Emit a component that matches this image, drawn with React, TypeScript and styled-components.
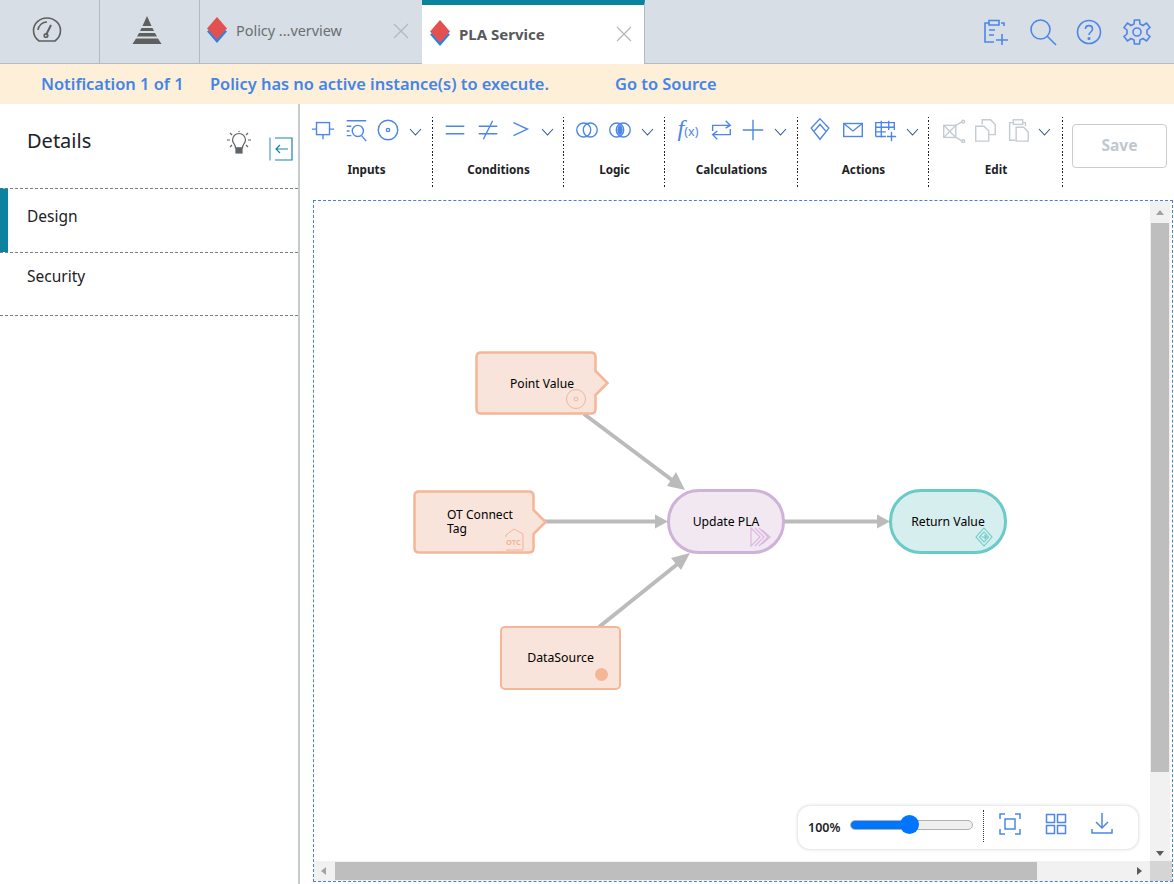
import { ReactNode } from 'react';
import styled, { createGlobalStyle } from 'styled-components';

const blue = '#4c86e8';
const grey = '#c3ccd3';
const teal = '#0b829e';
const orange = '#f5b597';

const GlobalStyle = createGlobalStyle`
  html, body { margin: 0; padding: 0; background: #fff; }
  body { font-family: "Noto Sans", "Liberation Sans", sans-serif; overflow: hidden; }
  * { box-sizing: border-box; }
`;

const Ico = ({ size = 28, color = blue, vb = 28, sw = 1.6, children }: { size?: number; color?: string; vb?: number; sw?: number; children: ReactNode }) => (
  <svg width={size} height={size} viewBox={`0 0 ${vb} ${vb}`} fill="none" stroke={color} strokeWidth={sw}>
    {children}
  </svg>
);

const Logo = () => (
  <svg width="22" height="28" viewBox="0 0 22 28">
    <path d="M1 15.5 L11 27 L21 15.5 L17.5 13 L4.5 13 Z" fill="#1f86f0" />
    <path d="M11 1 L21 12.5 L11 24 L1 12.5 Z" fill="#e2504f" />
  </svg>
);

const Close = () => (
  <svg width="16" height="16" viewBox="0 0 16 16" stroke="#b4b8bc" strokeWidth="1.3">
    <path d="M1 1 L15 15 M15 1 L1 15" />
  </svg>
);

const Chevron = () => (
  <svg width="13" height="8" viewBox="0 0 13 8" fill="none" stroke="#2a5a8c" strokeWidth="1.1">
    <path d="M1 1 L6.500 7 L12 1" />
  </svg>
);

const icons: Record<string, ReactNode> = {
  input: (
    <>
      <rect x="7" y="6" width="14" height="13" />
      <path d="M2 13 H7 M21 13 H26 M14 19 V24" />
    </>
  ),
  query: (
    <>
      <path d="M4 4 H25 M4 10 H9 M4 15 H7 M4 20 H9" />
      <circle cx="16" cy="15" r="6" />
      <path d="M20 20 L25 26" />
    </>
  ),
  point: (
    <>
      <circle cx="14" cy="14" r="10.5" />
      <circle cx="14" cy="14" r="1.8" />
    </>
  ),
  equal: <path d="M4 10 H24 M4 18 H24" />,
  notEqual: <path d="M4 10 H24 M4 18 H24 M19 4 L9 24" />,
  greater: <path d="M7 6 L22 13 L7 20" />,
  union: (
    <>
      <circle cx="10.5" cy="14" r="7.5" />
      <circle cx="17.5" cy="14" r="7.5" />
    </>
  ),
  intersect: (
    <>
      <circle cx="10.5" cy="14" r="7.5" />
      <circle cx="17.5" cy="14" r="7.5" />
      <path d="M14 8 A7.5 7.5 0 0 1 14 20 A7.5 7.5 0 0 1 14 8 Z" fill={blue} stroke="none" />
    </>
  ),
  loop: (
    <>
      <path d="M5 15 V9 H24 M19 4 L24 9 L19 12" />
      <path d="M24 13 V19 H5 M10 15 L5 19 L10 24" />
    </>
  ),
  plus: <path d="M3 14 H25 M14 3 V25" />,
  action: (
    <>
      <path d="M14 2 L23.500 12 L14 24 L4.500 12 Z" />
      <path d="M7.500 15.500 L14 8 L20.500 15.500" />
    </>
  ),
  mail: (
    <>
      <rect x="4" y="7" width="20" height="14" />
      <path d="M4 7 L14 15 L24 7" />
    </>
  ),
  table: (
    <>
      <path d="M4 21 V6 H24 V14 M4 11 H24 M4 16 H15 M4 21 H15 M10 4 V22 M18 4 V14" />
      <path d="M16 21 H26 M21 16 V26" />
    </>
  ),
  cut: (
    <>
      <rect x="4" y="9" width="13" height="13" />
      <path d="M4 9 L17 22 M17 9 L4 22 M17 9 L24 5 M17 22 L24 26" />
      <circle cx="25" cy="5" r="1.5" />
      <circle cx="25" cy="26" r="1.5" />
    </>
  ),
  copy: (
    <>
      <path d="M11 8 V3 H20 L25 8 V19 H18" />
      <path d="M4 10 H13 L18 15 V26 H4 Z" />
    </>
  ),
  paste: (
    <>
      <path d="M9 6 H5 V25 H11 M19 6 H22 V10" />
      <rect x="9" y="3" width="10" height="5" />
      <path d="M12 11 H20 L25 16 V26 H12 Z" />
    </>
  ),
};

const FxLabel = styled.span`
  font-family: "Liberation Serif", serif;
  font-style: italic;
  font-size: 24px;
  line-height: 26px;
  color: ${blue};
  white-space: nowrap;
  small {
    font-family: "Noto Sans", sans-serif;
    font-style: normal;
    font-size: 12.500px;
  }
`;

const toolbarGroups = [
  { label: 'Inputs', width: 133, icons: ['input', 'query', 'point'] },
  { label: 'Conditions', width: 131, icons: ['equal', 'notEqual', 'greater'] },
  { label: 'Logic', width: 101, icons: ['union', 'intersect'] },
  { label: 'Calculations', width: 133, icons: ['fx', 'loop', 'plus'] },
  { label: 'Actions', width: 131, icons: ['action', 'mail', 'table'] },
  { label: 'Edit', width: 134, icons: ['cut', 'copy', 'paste'], muted: true },
];

const flagPath = 'M6 1.500 H116 Q120.500 1.500 120.500 6 V20 L132.500 32 L120.500 44 V58 Q120.500 62.500 116 62.500 H6 Q1.500 62.500 1.500 58 V6 Q1.500 1.500 6 1.500 Z';

export default function App() {
  return (
    <Page>
      <GlobalStyle />
      <TabBar>
        <IconTab>
          <svg width="30" height="26" viewBox="0 0 30 26" fill="none" stroke="#5f5f5f" strokeWidth="1.6">
            <path d="M7 24 C3 21 1.5 17 1.5 13.5 A13.5 12.5 0 0 1 28.500 13.500 C28.500 17 27 21 23 24 Z" />
            <path d="M6 13 A9 9 0 0 1 15 5" />
            <path d="M14 18 L19 8" strokeWidth="2" />
            <circle cx="14" cy="18.500" r="1.800" />
          </svg>
        </IconTab>
        <IconTab>
          <svg width="30" height="28" viewBox="0 0 30 28" fill="#5f5f5f">
            <path d="M15 0 L19.500 10 H10.500 Z" />
            <path d="M9.500 12 H20.500 L22 15 H8 Z" />
            <path d="M7 17 H23 L25 20.500 H5 Z" />
            <path d="M4 22.500 H26 L29.500 28 H0.500 Z" />
          </svg>
        </IconTab>
        <DocTab>
          <Logo />
          <TabTitle>Policy ...verview</TabTitle>
          <Close />
        </DocTab>
        <DocTab $active>
          <Logo />
          <TabTitle $active>PLA Service</TabTitle>
          <Close />
        </DocTab>
        <TabTools>
          <Ico size={28}>
            <path d="M8 5 H4 V24 H13 M20 5 H23 V8 M8 2.500 H18 V7 H8 Z M8 12 H14 M8 17 H13" />
            <path d="M15 22 H27 M21 16 V27" />
          </Ico>
          <Ico size={28}>
            <circle cx="11.500" cy="11.500" r="9.500" />
            <path d="M18.500 18.500 L27 27" />
          </Ico>
          <Ico size={26} vb={26}>
            <circle cx="13" cy="13" r="11.500" />
            <path d="M9.500 10 C9.500 5.500 16.500 5.500 16.500 10 C16.500 13 13 13 13 16" />
            <circle cx="13" cy="19.500" r="0.800" />
          </Ico>
          <Ico size={28}>
            <circle cx="14" cy="14" r="4" />
            <path d="M11.500 2 H16.500 L17 6 L20 7.500 L23.500 5 L27 9.500 L24 12 V16 L27 18.500 L23.500 23 L20 20.500 L17 22 L16.500 26 H11.500 L11 22 L8 20.500 L4.500 23 L1 18.500 L4 16 V12 L1 9.500 L4.500 5 L8 7.500 L11 6 Z" />
          </Ico>
        </TabTools>
      </TabBar>
      <Notice>
        <NoticeText $width={169}>Notification 1 of 1</NoticeText>
        <NoticeText $width={405}>Policy has no active instance(s) to execute.</NoticeText>
        <NoticeText $width={120}>Go to Source</NoticeText>
      </Notice>
      <Body>
        <Sidebar>
          <SideHead>
            <SideTitle>Details</SideTitle>
            <svg width="26" height="24" viewBox="0 0 26 24" fill="none" stroke="#5f6468" strokeWidth="1.200">
              <path d="M9.500 17 C9.500 13 6.500 12.500 6.500 9 A6.500 6.500 0 0 1 19.500 9 C19.500 12.500 16.500 13 16.500 17 Z" />
              <rect x="10" y="17" width="6" height="5" fill="#5f6468" />
              <path d="M1 9 H4 M22 9 H25 M4 2 L6 4 M22 2 L20 4 M4 16 L6 14 M22 16 L20 14 M13 0 V1" />
            </svg>
            <svg width="24" height="24" viewBox="0 0 24 24" fill="none" stroke="#1486b0" strokeWidth="1.200">
              <path d="M1 0.500 V23.500" strokeWidth="1.600" stroke="#7fb6cc" />
              <path d="M6 1 H23 V23 H6" />
              <path d="M19 12 H7 M11 8 L7 12 L11 16" />
            </svg>
          </SideHead>
          <SideItem $active>Design</SideItem>
          <SideItem>Security</SideItem>
        </Sidebar>
        <Main>
          <Toolbar>
            {toolbarGroups.map((group) => (
              <ToolGroup key={group.label} $width={group.width}>
                <ToolIcons>
                  {group.icons.map((name) => (
                    <ToolIcon key={name}>
                      {name === 'fx' ? (
                        <FxLabel>
                          f<small>(x)</small>
                        </FxLabel>
                      ) : (
                        <Ico size={26} color={group.muted ? grey : blue} sw={1.500}>
                          {icons[name]}
                        </Ico>
                      )}
                    </ToolIcon>
                  ))}
                  <ChevronSlot>
                    <Chevron />
                  </ChevronSlot>
                </ToolIcons>
                <ToolLabel>{group.label}</ToolLabel>
              </ToolGroup>
            ))}
            <SaveButton>Save</SaveButton>
          </Toolbar>
          <Canvas>
            <Diagram>
              <svg width="860" height="680" viewBox="0 0 860 680" fill="#bbbbbb" stroke="none">
                <g stroke="#bbbbbb" strokeWidth="4">
                  <path d="M270 213 L362 282" />
                  <path d="M228 320.500 H344" />
                  <path d="M285 426 L366 361" />
                  <path d="M470 320.500 H566" />
                </g>
                <path d="M371 289 L353 285 L362 271 Z" />
                <path d="M354 320.500 L341 313.500 V327.500 Z" />
                <path d="M376 352 L367 369 L357 357 Z" />
                <path d="M576 320.500 L563 313.500 V327.500 Z" />
              </svg>
              <Node $x={161} $y={150} $w={135}>
                <svg width="135" height="64" viewBox="0 0 135 64">
                  <path d={flagPath} fill="#f8e4da" stroke={orange} strokeWidth="2.500" />
                  <circle cx="101" cy="48" r="9.500" fill="none" stroke={orange} strokeWidth="1" />
                  <circle cx="101" cy="48" r="2" fill="none" stroke={orange} strokeWidth="1" />
                </svg>
                <NodeLabel $left={35} $width={80} $top={2}>Point Value</NodeLabel>
              </Node>
              <Node $x={99} $y={289} $w={135}>
                <svg width="135" height="64" viewBox="0 0 135 64">
                  <path d={flagPath} fill="#f8e4da" stroke={orange} strokeWidth="2.500" />
                  <path d="M93 47 V45 L101 39 L110 44 V60 H93" fill="none" stroke={orange} strokeWidth="1" />
                </svg>
                <NodeLabel $left={34} $width={80}>OT Connect Tag</NodeLabel>
                <OtcMark>OTC</OtcMark>
              </Node>
              <Box $x={186} $y={425}>
                DataSource
                <SourceDot />
              </Box>
              <Pill $x={353} $y={288} $fill="#f2e8f2" $line="#cfb2d8">
                Update PLA
                <PillIcon>
                  <svg width="22" height="20" viewBox="0 0 22 20" fill="none" stroke="#dcb7e0" strokeWidth="1.200">
                    <path d="M2 1 V19 L11 10 Z" />
                    <path d="M6 1 L15 10 L6 19 M10 1 L19 10 L10 19 M13 3 L21 10 L13 17" />
                  </svg>
                </PillIcon>
              </Pill>
              <Pill $x={575} $y={288} $fill="#d6eeed" $line="#69cbc8">
                Return Value
                <PillIcon>
                  <svg width="18" height="20" viewBox="0 0 18 20" fill="none" stroke="#69cbc8" strokeWidth="1.100">
                    <path d="M9 1 L17 10 L9 19 L1 10 Z" />
                    <path d="M9 5 L13.500 10 L9 15 L4.500 10 Z" />
                    <path d="M6.500 10 H11.500 M9.500 8 L11.500 10 L9.500 12" />
                  </svg>
                </PillIcon>
              </Pill>
            </Diagram>
            <ZoomPanel>
              <ZoomValue>100%</ZoomValue>
              <ZoomSlider type="range" min={0} max={100} defaultValue={48} />
              <ZoomDivider />
              <ZoomTool>
                <Ico size={24} vb={24} sw={1.500}>
                  <rect x="7" y="7" width="10" height="10" />
                  <path d="M2 7 V2 H7 M17 2 H22 V7 M22 17 V22 H17 M7 22 H2 V17" />
                </Ico>
              </ZoomTool>
              <ZoomTool>
                <Ico size={24} vb={24} sw={1.500}>
                  <rect x="2.500" y="2.500" width="8" height="8" />
                  <rect x="13.500" y="2.500" width="8" height="8" />
                  <rect x="2.500" y="13.500" width="8" height="8" />
                  <rect x="13.500" y="13.500" width="8" height="8" />
                </Ico>
              </ZoomTool>
              <ZoomTool>
                <Ico size={24} vb={24} sw={1.500}>
                  <path d="M12 1 V16 M6 10 L12 16 L18 10 M2 17 V21 H22 V17" />
                </Ico>
              </ZoomTool>
            </ZoomPanel>
            <VScroll>
              <Arrow $dir="up" />
              <VThumb />
              <Arrow $dir="down" />
            </VScroll>
            <HScroll>
              <Arrow $dir="left" />
              <HThumb />
              <Arrow $dir="right" />
            </HScroll>
            <ScrollCorner />
          </Canvas>
        </Main>
      </Body>
    </Page>
  );
}

const Page = styled.div`
  width: 1174px;
  height: 884px;
  display: flex;
  flex-direction: column;
  overflow: hidden;
  color: #1d2226;
`;

const TabBar = styled.div`
  height: 64px;
  flex: none;
  display: flex;
  background: #d7dee5;
  border-bottom: 1px solid #b5babd;
`;

const IconTab = styled.div`
  width: 100px;
  display: flex;
  align-items: center;
  justify-content: center;
  border-right: 1px solid #b5babd;
  padding: 0 5px 4px 0;
`;

const DocTab = styled.div<{ $active?: boolean }>`
  width: ${(p) => (p.$active ? 223 : 222)}px;
  height: ${(p) => (p.$active ? 64 : 63)}px;
  display: flex;
  align-items: center;
  padding: ${(p) => (p.$active ? '0 12px 2px 7px' : '0 13px 2px 6px')};
  background: ${(p) => (p.$active ? '#fff' : 'transparent')};
  border-top: ${(p) => (p.$active ? `5px solid ${teal}` : 'none')};
  border-right: ${(p) => (p.$active ? '1px solid #b5babd' : 'none')};
  svg:first-child {
    margin-bottom: 2px;
  }
`;

const TabTitle = styled.span<{ $active?: boolean }>`
  flex: 1;
  margin-left: 8px;
  font-size: ${(p) => (p.$active ? 15 : 14.400)}px;
  font-weight: ${(p) => (p.$active ? 700 : 400)};
  color: ${(p) => (p.$active ? '#55595c' : '#6a6f73')};
`;

const TabTools = styled.div`
  width: 200px;
  margin-left: auto;
  display: flex;
  align-items: center;
  justify-content: center;
  gap: 19.500px;
  padding-right: 16px;
  svg:last-child {
    margin-left: 1px;
  }
`;

const Notice = styled.div`
  height: 40px;
  flex: none;
  display: flex;
  align-items: center;
  padding: 0 0 2px 41px;
  background: #feefd9;
`;

const NoticeText = styled.span<{ $width: number }>`
  width: ${(p) => p.$width}px;
  flex: none;
  font-size: 16.400px;
  font-weight: 600;
  white-space: nowrap;
  color: #4285e8;
`;

const Body = styled.div`
  flex: 1;
  display: flex;
  min-height: 0;
`;

const Sidebar = styled.aside`
  width: 300px;
  flex: none;
  border-right: 2px solid #c6ccd1;
`;

const SideHead = styled.div`
  height: 84px;
  display: flex;
  align-items: center;
  padding: 0 5px 0 27px;
  svg:nth-of-type(1) {
    margin: 0 17px 6px auto;
  }
  svg:nth-of-type(2) {
    margin-top: 5px;
  }
`;

const SideTitle = styled.h2`
  margin: 0 0 11px;
  font-size: 20px;
  font-weight: 400;
`;

const SideItem = styled.div<{ $active?: boolean }>`
  height: 64px;
  display: flex;
  align-items: center;
  padding-left: ${(p) => (p.$active ? 19 : 27)}px;
  padding-bottom: 10px;
  font-size: 15.500px;
  border-top: 1px dashed #7f7f7f;
  border-left: ${(p) => (p.$active ? `8px solid ${teal}` : 'none')};
  &:last-child {
    border-bottom: 1px dashed #7f7f7f;
    padding-bottom: 16px;
  }
`;

const Main = styled.main`
  flex: 1;
  min-width: 0;
  display: flex;
  flex-direction: column;
`;

const Toolbar = styled.div`
  height: 96px;
  flex: none;
  display: flex;
  align-items: flex-start;
  padding-top: 13px;
`;

const ToolGroup = styled.div<{ $width: number }>`
  width: ${(p) => p.$width}px;
  height: 70px;
  flex: none;
  display: flex;
  flex-direction: column;
  align-items: center;
  background: repeating-linear-gradient(to bottom, #222 0 1.500px, transparent 1.500px 3.400px) right top / 1.500px 100% no-repeat;
`;

const ToolIcons = styled.div`
  display: flex;
  align-items: center;
  height: 26px;
`;

const ToolIcon = styled.span`
  width: 32.500px;
  display: flex;
  justify-content: center;
`;

const ChevronSlot = styled.span`
  width: 22px;
  display: flex;
  justify-content: center;
  padding-top: 3px;
`;

const ToolLabel = styled.div`
  margin-top: 18px;
  font-size: 11.700px;
  font-weight: 700;
  color: #1d2226;
`;

const SaveButton = styled.button`
  width: 95px;
  height: 44px;
  margin: 7px 0 0 9px;
  padding-bottom: 3px;
  border: 1.500px solid #c6ced4;
  border-radius: 4px;
  background: #fff;
  font-family: inherit;
  font-size: 15.500px;
  font-weight: 700;
  color: #bfc8cf;
`;

const Canvas = styled.section`
  position: relative;
  margin: 0 1px 2px 13px;
  flex: 1;
  min-height: 0;
  border: 1px dashed #4a80d4;
`;

const Diagram = styled.div`
  position: relative;
  width: 860px;
  height: 680px;
  > svg {
    position: absolute;
    inset: 0;
  }
`;

const Node = styled.div<{ $x: number; $y: number; $w: number }>`
  position: absolute;
  left: ${(p) => p.$x}px;
  top: ${(p) => p.$y}px;
  width: ${(p) => p.$w}px;
  height: 64px;
  svg {
    display: block;
  }
`;

const NodeLabel = styled.div<{ $left: number; $width: number; $top?: number }>`
  position: absolute;
  left: ${(p) => p.$left}px;
  top: ${(p) => p.$top ?? 0}px;
  bottom: 0;
  width: ${(p) => p.$width}px;
  display: flex;
  align-items: center;
  font-size: 12.100px;
  line-height: 14px;
  color: #000;
`;

const OtcMark = styled.span`
  position: absolute;
  left: 93px;
  top: 47px;
  font-size: 7.500px;
  font-weight: 700;
  color: ${orange};
`;

const Box = styled.div<{ $x: number; $y: number }>`
  position: absolute;
  left: ${(p) => p.$x}px;
  top: ${(p) => p.$y}px;
  width: 121px;
  height: 64px;
  display: flex;
  align-items: center;
  justify-content: center;
  padding-bottom: 2px;
  background: #f8e4da;
  border: 2.500px solid ${orange};
  border-radius: 5px;
  font-size: 12.300px;
  color: #000;
`;

const SourceDot = styled.span`
  position: absolute;
  right: 11px;
  bottom: 7px;
  width: 13px;
  height: 13px;
  border-radius: 50%;
  background: ${orange};
`;

const Pill = styled.div<{ $x: number; $y: number; $fill: string; $line: string }>`
  position: absolute;
  left: ${(p) => p.$x}px;
  top: ${(p) => p.$y}px;
  width: 118px;
  height: 65px;
  display: flex;
  align-items: center;
  justify-content: center;
  background: ${(p) => p.$fill};
  border: 3px solid ${(p) => p.$line};
  border-radius: 32px;
  font-size: 12.200px;
  color: #000;
`;

const PillIcon = styled.span`
  position: absolute;
  right: 11px;
  bottom: 4px;
  display: flex;
`;

const ZoomPanel = styled.div`
  position: absolute;
  left: 483px;
  top: 604px;
  width: 342px;
  height: 45px;
  display: flex;
  align-items: center;
  padding-left: 10px;
  background: #fff;
  border: 1px solid #ebebeb;
  border-radius: 13px;
  box-shadow: 0 0 3px rgba(0, 0, 0, 0.12);
`;

const ZoomValue = styled.span`
  width: 42px;
  flex: none;
  font-size: 12.500px;
  font-weight: 600;
`;

const ZoomSlider = styled.input`
  appearance: none;
  width: 123px;
  height: 10px;
  margin: 0 0 6px;
  flex: none;
  border: 1px solid #b0b0b0;
  border-radius: 5px;
  background: linear-gradient(to right, #0075ff 48%, #efefef 48%);
  &::-webkit-slider-thumb {
    appearance: none;
    width: 19px;
    height: 19px;
    border-radius: 50%;
    background: #0075ff;
  }
`;

const ZoomDivider = styled.span`
  width: 0;
  height: 32px;
  margin: 0 3px 3px 10px;
  border-left: 1px dotted #333;
`;

const ZoomTool = styled.span`
  width: 46px;
  flex: none;
  display: flex;
  justify-content: center;
  padding-bottom: 7px;
`;

const VScroll = styled.div`
  position: absolute;
  top: 0;
  right: 2px;
  width: 20px;
  bottom: 19px;
  display: flex;
  flex-direction: column;
  align-items: center;
  justify-content: space-between;
  background: #f1f1f1;
  padding: 9px 0 6px;
`;

const VThumb = styled.div`
  width: 18px;
  height: 549px;
  margin-top: 8px;
  margin-bottom: auto;
  background: #bebebe;
`;

const HScroll = styled.div`
  position: absolute;
  left: 0;
  right: 22px;
  bottom: 0;
  height: 20px;
  display: flex;
  align-items: center;
  padding: 0 8px 0 7px;
  background: #f1f1f1;
`;

const HThumb = styled.div`
  width: 702px;
  height: 18px;
  margin-left: 9px;
  margin-right: auto;
  background: #bebebe;
`;

const ScrollCorner = styled.div`
  position: absolute;
  right: 0;
  bottom: 0;
  width: 22px;
  height: 20px;
  background: #d5d5d5;
`;

const arrowBorders: Record<string, string> = {
  up: 'border-width: 0 4.500px 5px; border-color: transparent transparent #a3a3a3;',
  down: 'border-width: 5px 4.500px 0; border-color: #5a5a5a transparent transparent;',
  left: 'border-width: 4.500px 5px 4.500px 0; border-color: transparent #a3a3a3 transparent transparent;',
  right: 'border-width: 4.500px 0 4.500px 5px; border-color: transparent transparent transparent #5a5a5a;',
};

const Arrow = styled.span<{ $dir: string }>`
  width: 0;
  height: 0;
  flex: none;
  border-style: solid;
  ${(p) => arrowBorders[p.$dir]}
`;
